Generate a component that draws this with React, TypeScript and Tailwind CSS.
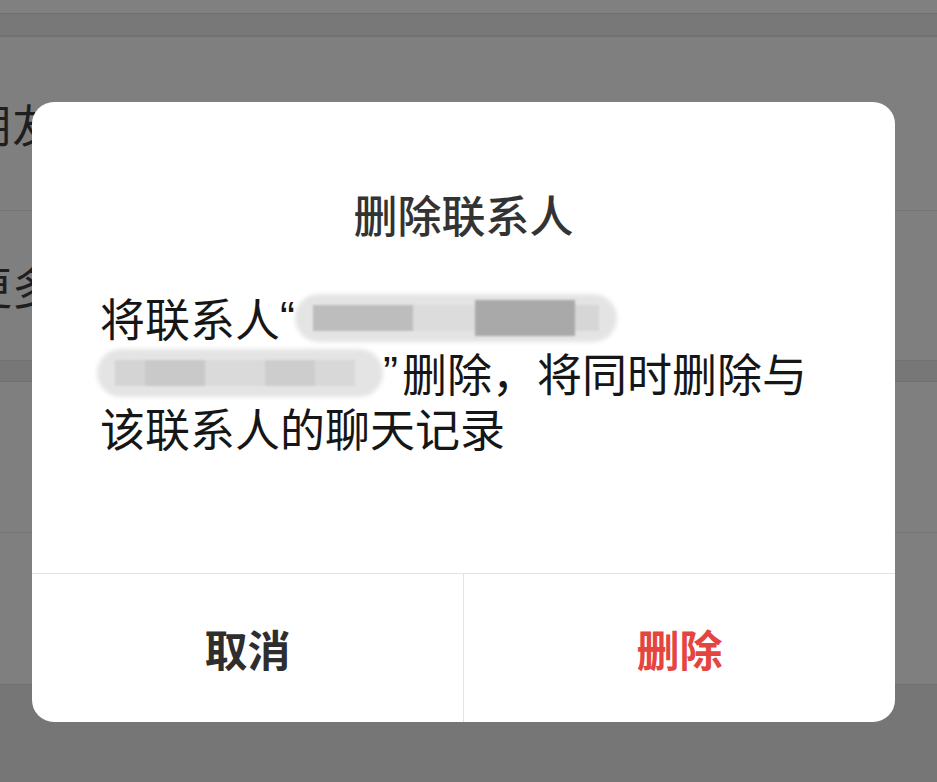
import React from 'react';

const cjk = { fontFamily: '"Noto Sans CJK SC", "Noto Sans", sans-serif' };
const latin = { fontFamily: '"Liberation Sans", Arial, sans-serif' };

// 打码区域：灰色马赛克块 + 模糊
const Mosaic: React.FC<{ blocks: { w: number; c: string; h?: number }[]; width: number }> = ({ blocks, width }) => (
  <span className="relative inline-block align-middle h-[48px]" style={{ width }}>
    <span className="absolute inset-0 rounded-full bg-[#e4e4e4] blur-[2px]" />
    <span className="absolute inset-x-[18px] top-[8px] bottom-[8px] flex items-center blur-[1px]">
      {blocks.map((b, i) => (
        <span key={i} className="block" style={{ width: b.w, height: b.h ?? 26, background: b.c }} />
      ))}
    </span>
  </span>
);

const App: React.FC = () => {
  return (
    <div className="relative w-[937px] h-[782px] overflow-hidden bg-[#7f7f7f] flex flex-col" style={cjk}>
      {/* 背后的通讯录页面（已被遮罩压暗） */}
      <div className="h-[13px] bg-[#808080]" />
      <div className="h-px bg-[#707070]" />
      <div className="h-[21px] bg-[#787878]" />
      <div className="h-[2px] bg-[#727272]" />
      <div className="h-[173px] flex items-center">
        <span className="ml-[-33px] text-[45px] leading-none text-[#1e1e1e]">朋友</span>
      </div>
      <div className="h-px bg-[#747474]" />
      <div className="h-[149px] flex items-center">
        <span className="ml-[-33px] text-[45px] leading-none text-[#1e1e1e]">更多</span>
      </div>
      <div className="h-[22px] bg-[#777777] border-y border-[#727272]" />
      <div className="h-[150px]" />
      <div className="h-px bg-[#747474]" />
      <div className="h-[151px]" />
      <div className="flex-1 bg-[#767676] border-t border-[#717171]" />

      {/* 弹窗 */}
      <div className="absolute left-[32px] top-[102px] w-[863px] h-[620px] rounded-[22px] bg-white flex flex-col">
        <div className="pt-[84px] text-center text-[44px] leading-[56px] font-medium text-[#333333]">删除联系人</div>
        <div className="flex-1 pt-[48px] pl-[68px] text-[45px] leading-[55px] text-[#161616]">
          <div className="flex items-center whitespace-nowrap">
            <span>将联系人</span>
            <span style={latin}>“</span>
            <Mosaic
              width={322}
              blocks={[
                { w: 100, c: '#bdbdbd' },
                { w: 62, c: '#dcdcdc' },
                { w: 100, c: '#a9a9a9', h: 36 },
                { w: 24, c: '#d6d6d6' },
              ]}
            />
          </div>
          <div className="flex items-center whitespace-nowrap ml-[-3px]">
            <Mosaic
              width={286}
              blocks={[
                { w: 30, c: '#d4d4d4' },
                { w: 60, c: '#c9c9c9' },
                { w: 60, c: '#dadada' },
                { w: 50, c: '#cdcdcd' },
                { w: 40, c: '#d8d8d8' },
              ]}
            />
            <span style={latin}>”</span>
            <span className="ml-[4px]">删除，将同时删除与</span>
          </div>
          <div className="whitespace-nowrap">该联系人的聊天记录</div>
        </div>
        <div className="h-px bg-[#e3e3e3]" />
        <div className="h-[148px] flex">
          <button className="flex-1 flex items-center justify-center text-[43px] font-bold text-[#2e2e2e]">取消</button>
          <div className="w-px bg-[#e3e3e3]" />
          <button className="flex-1 flex items-center justify-center text-[43px] font-bold text-[#e5453f]">删除</button>
        </div>
      </div>
    </div>
  );
};

export default App;
